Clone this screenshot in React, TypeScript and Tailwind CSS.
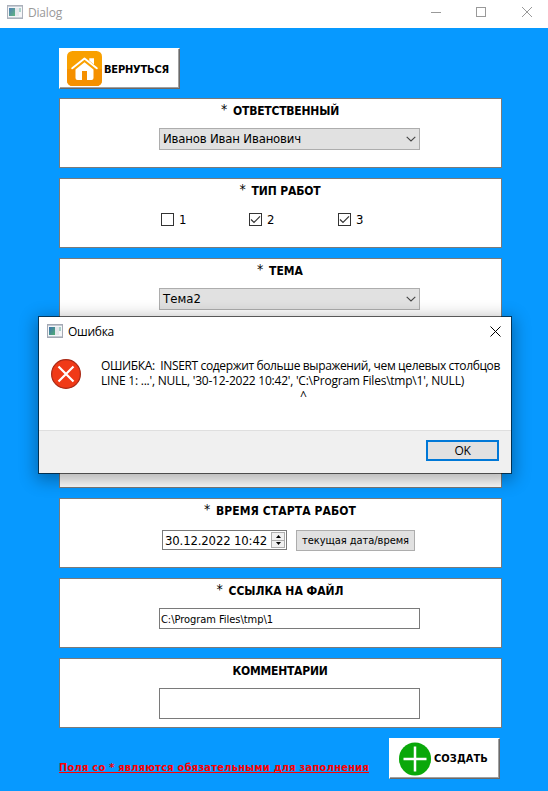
import { useLayoutEffect, useRef, type ReactNode } from 'react';

const TAHOMA = "font-['DejaVu_Sans_Condensed','DejaVu_Sans',sans-serif] [font-stretch:condensed]";
const SEGOE = "font-['Open_Sans','Noto_Sans',sans-serif] [font-stretch:normal]";

function WindowIcon({ faded = false }: { faded?: boolean }) {
  return (
    <svg width="16" height="14" viewBox="0 0 16 14" className={faded ? 'opacity-90' : ''} shapeRendering="crispEdges">
      <defs>
        <linearGradient id="pane" x1="0" y1="0" x2="1" y2="1">
          <stop offset="0" stopColor="#3f70b0" />
          <stop offset="1" stopColor="#4fae72" />
        </linearGradient>
      </defs>
      <rect x="0.5" y="0.5" width="15" height="13" fill="#f4f6f8" stroke="#a4a9b4" />
      <rect x="1" y="1" width="14" height="1" fill="#c3c9d2" />
      <rect x="2" y="3" width="6" height="8" fill="url(#pane)" />
      <rect x="8" y="3" width="4" height="8" fill="#e3e6ea" />
      <rect x="12" y="3" width="2" height="4" fill="#a5cfc8" />
      <rect x="1" y="12" width="14" height="1" fill="#c3c9d2" />
    </svg>
  );
}

/* A single-line caption whose letter spacing is adjusted to a fixed measure. */
function Fit({ width, children }: { width: number; children: string }) {
  const ref = useRef<HTMLSpanElement>(null);
  useLayoutEffect(() => {
    const el = ref.current;
    if (!el || !children) return;
    el.style.letterSpacing = '0px';
    const natural = el.getBoundingClientRect().width;
    const spacing = (width - natural) / children.length;
    el.style.letterSpacing = `${spacing.toFixed(4)}px`;
  }, [width, children]);
  return (
    <span ref={ref} className="inline-block shrink-0 leading-[15px] whitespace-pre">
      {children}
    </span>
  );
}

function Panel({ title = '', width = 0, children }: { title?: string; width?: number; children?: ReactNode }) {
  const required = title.startsWith('* ');
  return (
    <section className="flex h-[70px] w-[443px] shrink-0 flex-col border border-[#7a7a7a] bg-white">
      <h2 className="flex h-[24px] shrink-0 items-center justify-center pr-px text-[12px] font-bold">
        {required && <span className="w-[12px] pb-[3px] text-[14px] leading-[15px] font-normal">*</span>}
        {title && <Fit width={required ? width - 12 : width}>{title.replace('* ', '')}</Fit>}
      </h2>
      {children}
    </section>
  );
}

function Combo({ value, width }: { value: string; width: number }) {
  return (
    <div className="mt-[5px] ml-[99px] flex h-[22px] w-[261px] items-center justify-between border border-[#adadad] bg-[#e1e1e1] pr-[3px] pl-[3px] text-[13px]">
      <span className="flex pb-px"><Fit width={width}>{value}</Fit></span>
      <svg width="10" height="6" viewBox="0 0 10 6" fill="none" stroke="#444" strokeWidth="1.1">
        <path d="M0.700 0.900 5 5 9.300 0.900" />
      </svg>
    </div>
  );
}

function Check({ label, checked }: { label: string; checked?: boolean }) {
  return (
    <label className="flex items-center gap-[5px] text-[13px]">
      <span className="flex size-[13px] items-center justify-center border border-[#333] bg-white">
        {checked && (
          <svg width="11" height="11" viewBox="0 0 11 11" fill="none" stroke="#333" strokeWidth="1.2">
            <path d="M1 5.5 4 8.5 10 2.3" />
          </svg>
        )}
      </span>
      <span className="flex h-[13px] w-[7px] items-center"><Fit width={7}>{label}</Fit></span>
    </label>
  );
}

export default function App() {
  return (
    <div className={`relative flex h-[791px] w-[548px] flex-col overflow-hidden bg-[#0799ff] text-black ${TAHOMA}`}>
      <header className={`flex h-[28px] shrink-0 items-start bg-white pl-[7px] text-[12px] text-[#999] ${SEGOE}`}>
        <div className="mt-[5px]"><WindowIcon faded /></div>
        <div className="mt-[5px] ml-[5px] flex"><Fit width={34}>Dialog</Fit></div>
        <svg width="107" height="12" className="mt-[6px] mr-[14px] ml-auto" fill="none" stroke="#999" viewBox="0 0 107 12">
          <path d="M4 6.5h10" shapeRendering="crispEdges" />
          <rect x="49.5" y="1.5" width="9" height="9" shapeRendering="crispEdges" />
          <path d="M95 1 105 11M105 1 95 11" />
        </svg>
      </header>

      <main className="flex flex-col pt-[20px] pl-[59px]">
        <button className="mb-[9px] flex h-[41px] w-[121px] items-center border border-t-white border-r-[#696969] border-b-[#696969] border-l-white bg-white pl-[7px] text-[11px] font-bold shadow-[inset_-1px_-1px_0_#a0a0a0]">
          <svg width="35" height="35" viewBox="0 0 35 35" className="shrink-0">
            <rect width="35" height="35" rx="5.5" fill="#f9a000" />
            <path d="M0 18h35v11.5a5.5 5.5 0 0 1-5.5 5.5h-24A5.5 5.5 0 0 1 0 29.5Z" fill="#f59000" />
            <path d="M5.200 17.300 17.500 7.500 29.800 17.300" fill="none" stroke="#fff" strokeWidth="1.900" strokeLinecap="round" strokeLinejoin="round" />
            <path d="M22.300 7.300H27v6.200l-4.700-3.700Z" fill="#fff" />
            <path d="M8.500 18.600 17.500 11.300 26.500 18.600V27a2 2 0 0 1-2 2h-4.500v-9h-5v9h-4.500a2 2 0 0 1-2-2Z" fill="#fff" />
          </svg>
          <span className="ml-[2px] flex pt-[2px]"><Fit width={65}>ВЕРНУТЬСЯ</Fit></span>
        </button>

        <div className="flex flex-col gap-[10px]">
          <Panel title="* ОТВЕТСТВЕННЫЙ" width={118}><Combo value="Иванов Иван Иванович" width={138} /></Panel>
          <Panel title="* ТИП РАБОТ" width={81}>
            <div className="mt-[10px] ml-[101px] flex gap-[63px]">
              <Check label="1" />
              <Check label="2" checked />
              <span className="ml-px"><Check label="3" checked /></span>
            </div>
          </Panel>
          <Panel title="* ТЕМА" width={46}><Combo value="Тема2" width={38} /></Panel>
          <Panel />
          <Panel />
          <Panel title="* ВРЕМЯ СТАРТА РАБОТ" width={152}>
            <div className="mt-[7px] ml-[102px] flex items-start gap-[9px]">
              <div className="flex h-[20px] w-[125px] items-center border border-[#7a7a7a] bg-white pl-[2px] text-[13px]">
                <Fit width={102}>30.12.2022 10:42</Fit>
                <div className="mr-px ml-auto flex h-[16px] w-[14px] flex-col divide-y divide-[#adadad] border border-[#adadad] bg-[#f0f0f0]">
                  <span className="flex flex-1 items-center justify-center">
                    <svg width="5" height="3" viewBox="0 0 5 3"><path d="M0 3 2.500 0 5 3Z" /></svg>
                  </span>
                  <span className="flex flex-1 items-center justify-center">
                    <svg width="5" height="3" viewBox="0 0 5 3"><path d="M0 0 2.500 3 5 0Z" /></svg>
                  </span>
                </div>
              </div>
              <button className="flex h-[21px] w-[119px] items-center justify-center border border-[#adadad] bg-[#e1e1e1] text-[11px]">
                <Fit width={107}>текущая дата/время</Fit>
              </button>
            </div>
          </Panel>
          <Panel title="* ССЫЛКА НА ФАЙЛ" width={127}>
            <div className="mt-[5px] ml-[99px] flex h-[21px] w-[261px] items-center border border-[#7a7a7a] bg-white pt-px pl-px text-[11px]">
              <Fit width={112}>C:\Program Files\tmp\1</Fit>
            </div>
          </Panel>
          <Panel title="КОММЕНТАРИИ" width={95}>
            <div className="mt-[5px] ml-[99px] h-[31px] w-[261px] border border-[#7a7a7a] bg-white" />
          </Panel>
        </div>

        <footer className="mt-[10px] flex h-[41px] w-[441px] items-start justify-between">
          <div className="mt-[22px] flex h-[13px] w-[310px] border-b border-[#ff0000] text-[11px] font-bold text-[#ff0000]">
            <Fit width={310}>Поля со * являются обязательными для заполнения</Fit>
          </div>
          <button className="flex h-[41px] w-[111px] items-center border border-t-white border-r-[#696969] border-b-[#696969] border-l-white bg-white pl-[9px] text-[11px] font-bold shadow-[inset_-1px_-1px_0_#a0a0a0]">
            <svg width="32" height="34" viewBox="0 0 32 34" className="shrink-0">
              <ellipse cx="16" cy="17" rx="16" ry="16.500" fill="#0aa80a" />
              <path d="M4.500 17h23M16 4.500v25" stroke="#fff" strokeWidth="2.500" />
            </svg>
            <span className="ml-[3px] flex"><Fit width={54}>СОЗДАТЬ</Fit></span>
          </button>
        </footer>
      </main>

      <div
        role="alertdialog"
        className={`absolute top-[316px] left-[38px] flex h-[158px] w-[474px] flex-col border border-black/60 bg-white bg-clip-padding text-[12px] shadow-[0_4px_16px_2px_rgba(0,0,0,0.32)] ${SEGOE}`}
      >
        <div className="flex h-[30px] shrink-0 items-start pl-[8px]">
          <div className="mt-[7px]"><WindowIcon /></div>
          <div className="mt-[7px] ml-[5px] flex"><Fit width={46}>Ошибка</Fit></div>
          <svg width="11" height="11" viewBox="0 0 11 11" className="mt-[9px] mr-[10px] ml-auto" stroke="#000" strokeWidth="1">
            <path d="M0.500 0.500 10.500 10.500M10.500 0.500 0.500 10.500" />
          </svg>
        </div>
        <div className="flex h-[83px] shrink-0 items-start pl-[12px]">
          <svg width="30" height="30" viewBox="0 0 30 30" className="mt-[12px]">
            <circle cx="15" cy="15" r="14.400" fill="#f03a17" stroke="#a82a17" strokeWidth="1.200" />
            <path d="M7.500 7.500 22.500 22.500M22.500 7.500 7.500 22.500" stroke="#fff" strokeWidth="2.200" />
          </svg>
          <div className="mt-[11px] ml-[20px] flex flex-col items-start">
            <Fit width={399}>{'ОШИБКА:\u00a0 INSERT содержит больше выражений, чем целевых столбцов'}</Fit>
            <Fit width={363}>{"LINE 1: ...', NULL, '30-12-2022 10:42', 'C:\\Program Files\\tmp\\1', NULL)"}</Fit>
            <span className="ml-[199px] flex"><Fit width={6}>^</Fit></span>
          </div>
        </div>
        <div className="flex flex-1 items-start justify-end border-t border-[#dfdfdf] bg-[#f0f0f0] pt-[9px] pr-[12px]">
          <button className="flex h-[21px] w-[73px] items-center justify-center border-2 border-[#0078d7] bg-[#e1e1e1]">
            <Fit width={16}>OK</Fit>
          </button>
        </div>
      </div>
    </div>
  );
}
